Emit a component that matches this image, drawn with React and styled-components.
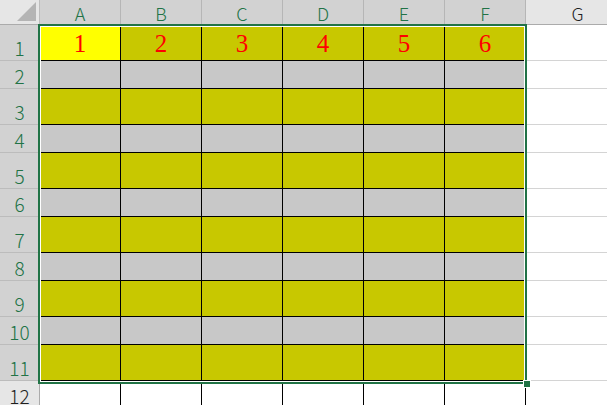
import React from 'react';
import styled, { createGlobalStyle } from 'styled-components';

const GlobalStyle = createGlobalStyle`
  html, body {
    margin: 0;
    padding: 0;
    background: #ffffff;
    overflow: hidden;
  }
`;

const GREEN = '#217346';

const Sheet = styled.div`
  position: relative;
  display: grid;
  grid-template-columns: 40px repeat(6, 81px) 104px;
  grid-template-rows: 25px 36px 28px 36px 28px 36px 28px 36px 28px 36px 28px 36px 28px;
  width: 607px;
  height: 405px;
  overflow: hidden;
  font-family: "Noto Sans CJK SC", "Noto Sans", sans-serif;
`;

const Corner = styled.div`
  position: relative;
  box-sizing: border-box;
  background: #e6e6e6;
  border-right: 1px solid #bdbdbd;
  border-bottom: 1px solid #ababab;
  display: flex;
  justify-content: flex-end;
  align-items: flex-end;
  padding: 0 3px 3px 0;
`;

const Triangle = styled.div`
  width: 0;
  height: 0;
  border-left: 19px solid transparent;
  border-bottom: 19px solid #b4b4b4;
`;

const ColHead = styled.div`
  box-sizing: border-box;
  background: ${(p) => (p.selected ? '#d2d2d2' : '#e6e6e6')};
  color: ${(p) => (p.selected ? GREEN : '#1f1f1f')};
  border-right: 1px solid #b6b6b6;
  border-bottom: 1px solid #ababab;
  display: flex;
  justify-content: center;
  align-items: flex-end;
  padding-bottom: 2px;
  font-size: 18px;
  font-weight: 300;
  line-height: 1;
`;

const RowHead = styled.div`
  box-sizing: border-box;
  background: ${(p) => (p.selected ? '#d2d2d2' : '#e6e6e6')};
  color: ${(p) => (p.selected ? GREEN : '#1f1f1f')};
  border-right: 1px solid #ababab;
  border-bottom: 1px solid #bcbcbc;
  display: flex;
  justify-content: center;
  align-items: flex-end;
  padding-bottom: 3px;
  font-size: 19px;
  font-weight: 300;
  line-height: 1;
`;

const fills = {
  yellow: '#ffff00',
  olive: '#c8c800',
  gray: '#c8c8c8',
  white: '#ffffff',
};

const Cell = styled.div`
  box-sizing: border-box;
  background: ${(p) => fills[p.fill]};
  border-right: 1px solid ${(p) => (p.plain ? '#d4d4d4' : '#000000')};
  border-bottom: 1px solid ${(p) => (p.plain ? '#d4d4d4' : p.open ? 'transparent' : '#000000')};
  display: flex;
  justify-content: center;
  align-items: flex-end;
  padding-bottom: 4px;
  color: #ff0000;
  font-family: "Liberation Serif", "DejaVu Serif", serif;
  font-size: 25px;
  line-height: 1;
`;

const Selection = styled.div`
  position: absolute;
  left: 38px;
  top: 24px;
  width: 489px;
  height: 360px;
  box-sizing: border-box;
  border: 2px solid ${GREEN};
  box-shadow: inset 0 0 0 1px #ffffff;
  pointer-events: none;
`;

const Handle = styled.div`
  position: absolute;
  right: -6px;
  bottom: -6px;
  width: 6px;
  height: 6px;
  background: ${GREEN};
  border: 1px solid #ffffff;
`;

const columns = ['A', 'B', 'C', 'D', 'E', 'F'];
const rows = Array.from({ length: 12 }, (_, i) => i + 1);

const fillFor = (row, col) => {
  if (row === 12) return 'white';
  if (row === 1 && col === 0) return 'yellow';
  return row % 2 === 1 ? 'olive' : 'gray';
};

const App = () => (
  <>
    <GlobalStyle />
    <Sheet>
      <Corner>
        <Triangle />
      </Corner>
      {columns.map((c) => (
        <ColHead key={c} selected>
          {c}
        </ColHead>
      ))}
      <ColHead>G</ColHead>

      {rows.map((r) => (
        <React.Fragment key={r}>
          <RowHead selected={r <= 11}>{r}</RowHead>
          {columns.map((c, ci) => (
            <Cell key={c} fill={fillFor(r, ci)} open={r === 12}>
              {r === 1 ? ci + 1 : ''}
            </Cell>
          ))}
          <Cell fill="white" plain />
        </React.Fragment>
      ))}

      <Selection>
        <Handle />
      </Selection>
    </Sheet>
  </>
);

export default App;
